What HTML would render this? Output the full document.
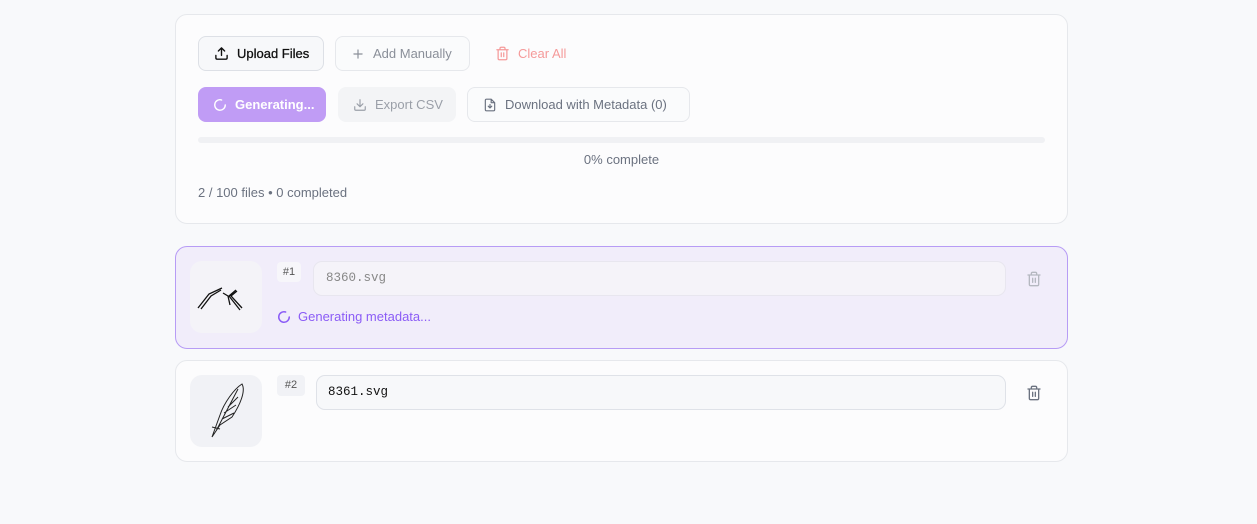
<!DOCTYPE html><html><head><style>
*{box-sizing:border-box;margin:0;padding:0}
body{width:1257px;height:524px;background:#f8f9fb;font-family:"Liberation Sans",sans-serif;position:relative;overflow:hidden;font-size:13px}
.abs{position:absolute}
.card{position:absolute;left:175px;width:893px;border:1px solid #e6e8ec;border-radius:12px;background:#fcfcfd}
.btn{position:absolute;height:35px;border-radius:8px;display:flex;align-items:center;gap:8px;font-size:13px;padding-left:15px}
svg{display:block}
.mono{font-family:"Liberation Mono",monospace;font-size:12.5px}
</style></head><body>
<div class="card" style="top:14px;height:210px"></div>
<div class="btn" style="left:198px;top:36px;width:126px;border:1px solid #dde0e6;background:#f7f8fa;color:#111;-webkit-text-stroke:0.3px #111">
<svg width="15" height="15" viewBox="0 0 24 24" fill="none" stroke="#111" stroke-width="2.2" stroke-linecap="round" stroke-linejoin="round"><path d="M21 15v4a2 2 0 0 1-2 2H5a2 2 0 0 1-2-2v-4M17 8l-5-5-5 5M12 3v12"/></svg>Upload Files</div>
<div class="btn" style="left:335px;top:36px;width:135px;border:1px solid #e6e8ec;background:#fafbfc;color:#8a8f99">
<svg width="14" height="14" viewBox="0 0 24 24" fill="none" stroke="#8a8f99" stroke-width="2" stroke-linecap="round"><path d="M12 5v14M5 12h14"/></svg>Add Manually</div>
<div class="btn" style="left:480px;top:36px;width:100px;color:#f59a9a">
<svg width="15" height="15" viewBox="0 0 24 24" fill="none" stroke="#f59a9a" stroke-width="2" stroke-linecap="round"><path d="M3 6h18M19 6v14a2 2 0 0 1-2 2H7a2 2 0 0 1-2-2V6M8 6V4a2 2 0 0 1 2-2h4a2 2 0 0 1 2 2v2M10 11v6M14 11v6"/></svg>Clear All</div>
<div class="btn" style="left:198px;top:87px;width:128px;background:#c09cf5;color:#fff;font-weight:bold">
<svg width="14" height="14" viewBox="0 0 24 24" fill="none" stroke="#fff" stroke-width="2.4" stroke-linecap="round"><path d="M21 12a9 9 0 1 1-6.2-8.6"/></svg>Generating...</div>
<div class="btn" style="left:338px;top:87px;width:118px;background:#f3f4f6;color:#9a9fa8">
<svg width="14" height="14" viewBox="0 0 24 24" fill="none" stroke="#9a9fa8" stroke-width="2" stroke-linecap="round" stroke-linejoin="round"><path d="M21 15v4a2 2 0 0 1-2 2H5a2 2 0 0 1-2-2v-4M7 10l5 5 5-5M12 15V3"/></svg>Export CSV</div>
<div class="btn" style="left:467px;top:87px;width:223px;border:1px solid #e6e8ec;background:#fafbfc;color:#6b7280">
<svg width="14" height="14" viewBox="0 0 24 24" fill="none" stroke="#6b7280" stroke-width="2" stroke-linecap="round" stroke-linejoin="round"><path d="M14 2H6a2 2 0 0 0-2 2v16a2 2 0 0 0 2 2h12a2 2 0 0 0 2-2V8zM14 2v6h6M12 11v6M9 14l3 3 3-3"/></svg>Download with Metadata (0)</div>
<div class="abs" style="left:198px;top:137px;width:847px;height:6px;border-radius:3px;background:#f0f1f4"></div>
<div class="abs" style="left:198px;top:152px;width:847px;text-align:center;color:#6b7280">0% complete</div>
<div class="abs" style="left:198px;top:185px;color:#6b7280">2 / 100 files • 0 completed</div>

<div class="card" style="top:246px;height:103px;background:#f1edfa;border-color:#b79cf5"></div>
<div class="abs" style="left:190px;top:261px;width:72px;height:72px;border-radius:12px;background:#f4f3f8">
<svg width="72" height="72" viewBox="0 0 72 72" fill="none" stroke="#111" stroke-width="1.3"><path d="M8 47L19 33L32 27M11 48L21 35L31 29M33 32L38 35L40 44M50 49L39 35L46 29M52 47L41 35L47 30"/></svg></div>
<div class="abs" style="left:277px;top:262px;width:24px;height:20px;border-radius:4px;background:#f7f6fa;color:#555;font-size:11px;text-align:center;line-height:20px">#1</div>
<div class="abs mono" style="left:313px;top:261px;width:693px;height:35px;border-radius:9px;border:1px solid #e8e6ef;background:#f5f3f9;color:#888;padding-left:12px;line-height:33px">8360.svg</div>
<svg class="abs" style="left:1026px;top:271px" width="16" height="16" viewBox="0 0 24 24" fill="none" stroke="#b5b8c0" stroke-width="2" stroke-linecap="round"><path d="M3 6h18M19 6v14a2 2 0 0 1-2 2H7a2 2 0 0 1-2-2V6M8 6V4a2 2 0 0 1 2-2h4a2 2 0 0 1 2 2v2M10 11v6M14 11v6"/></svg>
<svg class="abs" style="left:277px;top:310px" width="14" height="14" viewBox="0 0 24 24" fill="none" stroke="#8b5cf6" stroke-width="2.6" stroke-linecap="round"><path d="M21 12a9 9 0 1 1-6.2-8.6"/></svg>
<div class="abs" style="left:298px;top:309px;color:#8b5cf6">Generating metadata...</div>

<div class="card" style="top:360px;height:102px"></div>
<div class="abs" style="left:190px;top:375px;width:72px;height:72px;border-radius:12px;background:#f1f2f6">
<svg width="72" height="72" viewBox="0 0 72 72" fill="none" stroke="#222" stroke-width="1"><path d="M22 62L30 40C34 28 44 14 52 9C56 16 50 30 42 42L30 50Z M26 56L48 14 M32 44L44 38 M34 38L46 30 M38 32L48 22 M22 52L30 54"/></svg></div>
<div class="abs" style="left:277px;top:375px;width:28px;height:21px;border-radius:4px;background:#f1f2f6;color:#555;font-size:11px;text-align:center;line-height:21px">#2</div>
<div class="abs mono" style="left:316px;top:375px;width:690px;height:35px;border-radius:9px;border:1px solid #dfe2e8;background:#f7f8fa;color:#111;padding-left:11px;line-height:33px">8361.svg</div>
<svg class="abs" style="left:1026px;top:385px" width="16" height="16" viewBox="0 0 24 24" fill="none" stroke="#6b7280" stroke-width="2" stroke-linecap="round"><path d="M3 6h18M19 6v14a2 2 0 0 1-2 2H7a2 2 0 0 1-2-2V6M8 6V4a2 2 0 0 1 2-2h4a2 2 0 0 1 2 2v2M10 11v6M14 11v6"/></svg>
</body></html>
